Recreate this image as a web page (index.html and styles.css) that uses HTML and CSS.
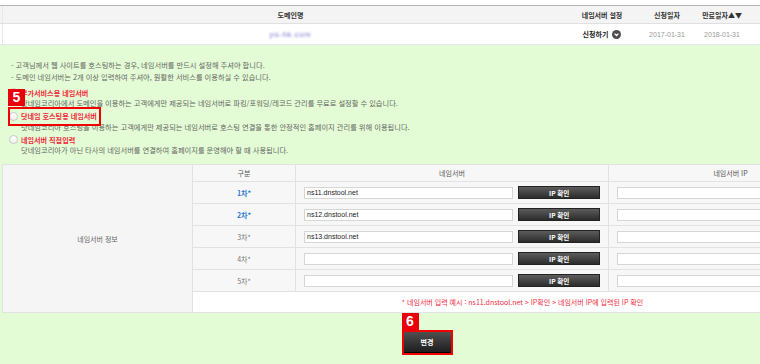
FILE: index.html
```html
<!DOCTYPE html>
<html lang="ko">
<head>
<meta charset="utf-8">
<title>네임서버 설정</title>
<link rel="stylesheet" href="styles.css">
</head>
<body>
<div class="page">
  <div class="domain">
    <div class="drow dhead">
      <div class="c c1">도메인명</div>
      <div class="c c2">네임서버 설정</div>
      <div class="c c3">신청일자</div>
      <div class="c c4">만료일자▲▼</div>
      <div class="c c5"></div>
    </div>
    <div class="drow dbody">
      <div class="c c1"><span class="blurred">ps-hk.com</span></div>
      <div class="c c2"><b class="apply">신청하기</b><svg class="chev" width="9" height="9" viewBox="0 0 9 9"><circle cx="4.5" cy="4.5" r="4.5" fill="#4d4d4d"/><polyline points="2.6,3.6 4.5,5.5 6.4,3.6" fill="none" stroke="#fff" stroke-width="1.3"/></svg></div>
      <div class="c c3 date">2017-01-31</div>
      <div class="c c4 date">2018-01-31</div>
      <div class="c c5"></div>
    </div>
  </div>

  <div class="setup">
    <ul class="notice">
      <li>- 고객님께서 웹 사이트를 호스팅하는 경우, 네임서버를 반드시 설정해 주셔야 합니다.</li>
      <li>- 도메인 네임서버는 2개 이상 입력하여 주셔야, 원활한 서비스를 이용하실 수 있습니다.</li>
    </ul>

    <div class="options">
      <div class="opt">
        <div class="opt-label"><span class="radio"></span><span class="lbl">부가서비스용 네임서버</span></div>
        <p class="desc">닷네임코리아에서 도메인을 이용하는 고객에게만 제공되는 네임서버로 파킹/포워딩/레코드 관리를 무료로 설정할 수 있습니다.</p>
      </div>
      <div class="opt">
        <div class="opt-label"><span class="radio"></span><span class="lbl">닷네임 호스팅용 네임서버</span><span class="mark mark5"><span class="badge">5</span></span></div>
        <p class="desc">닷네임코리아 호스팅을 이용하는 고객에게만 제공되는 네임서버로 호스팅 연결을 통한 안정적인 홈페이지 관리를 위해 이용됩니다.</p>
      </div>
      <div class="opt">
        <div class="opt-label"><span class="radio"></span><span class="lbl">네임서버 직접입력</span></div>
        <p class="desc">닷네임코리아가 아닌 타사의 네임서버를 연결하여 홈페이지를 운영해야 할 때 사용됩니다.</p>
      </div>
    </div>

    <table class="ns">
      <colgroup>
        <col class="k-info"><col class="k-no"><col class="k-ns"><col class="k-ip">
      </colgroup>
      <tr class="th">
        <td class="info" rowspan="7">네임서버 정보</td>
        <th>구분</th>
        <th>네임서버</th>
        <th>네임서버 IP</th>
      </tr>
      <tr>
        <td class="no req">1차*</td>
        <td class="nsc"><div class="fld"><input class="inp" value="ns11.dnstool.net"><span class="btn">IP 확인</span></div></td>
        <td class="ipc"><input class="inp ipin" value=""></td>
      </tr>
      <tr>
        <td class="no req">2차*</td>
        <td class="nsc"><div class="fld"><input class="inp" value="ns12.dnstool.net"><span class="btn">IP 확인</span></div></td>
        <td class="ipc"><input class="inp ipin" value=""></td>
      </tr>
      <tr>
        <td class="no">3차*</td>
        <td class="nsc"><div class="fld"><input class="inp" value="ns13.dnstool.net"><span class="btn">IP 확인</span></div></td>
        <td class="ipc"><input class="inp ipin" value=""></td>
      </tr>
      <tr>
        <td class="no">4차*</td>
        <td class="nsc"><div class="fld"><input class="inp" value=""><span class="btn">IP 확인</span></div></td>
        <td class="ipc"><input class="inp ipin" value=""></td>
      </tr>
      <tr>
        <td class="no">5차*</td>
        <td class="nsc"><div class="fld"><input class="inp" value=""><span class="btn">IP 확인</span></div></td>
        <td class="ipc"><input class="inp ipin" value=""></td>
      </tr>
      <tr class="note">
        <td colspan="3">* 네임서버 입력 예시 : ns11.dnstool.net &gt; IP확인 &gt; 네임서버 IP에 입력된 IP 확인</td>
      </tr>
    </table>

    <div class="actions">
      <div class="mark6"><span class="badge">6</span><span class="submit">변경</span></div>
    </div>
  </div>
</div>
</body>
</html>
```

FILE: styles.css
```css
html, body {
  margin: 0;
  padding: 0;
  overflow: hidden;
  background: #fff;
}
body {
  font-family: "Noto Sans CJK KR", "Liberation Sans", sans-serif;
  font-size: 7px;
  color: #666;
}
.page {
  width: 854px;
  padding-top: 5px;
}

/* top domain table */
.domain {
  border-top: 1px solid #b4b4b4;
}
.drow {
  display: grid;
  grid-template-columns: 2px 576px 48px 82px 28px 1fr;
}
.drow::before {
  content: "";
}
.dhead {
  height: 17px;
  background: #f4f4f4;
  border-bottom: 1px solid #e0e0e0;
  color: #333;
  font-weight: bold;
}
.dbody {
  height: 20px;
  background: #fff;
  border-bottom: 1px solid #e6e6e6;
}
.c {
  display: flex;
  align-items: center;
  justify-content: center;
  white-space: nowrap;
}
.c1 {
  border-left: 1px solid #e8e8e8;
}
.blurred {
  color: #7f79d6;
  filter: blur(1.1px);
  font-family: "Liberation Sans", sans-serif;
  font-size: 8px;
  letter-spacing: 0.5px;
}
.apply {
  color: #222;
  margin-right: 4px;
}
.chev {
  display: block;
}
.date {
  color: #999;
  font-family: "Liberation Sans", sans-serif;
  font-size: 7px;
}

/* green setup area */
.setup {
  background: #e4fcd5;
  padding-bottom: 20px;
}
.notice {
  list-style: none;
  margin: 0;
  padding: 14px 0 0 11px;
  line-height: 12px;
  font-size: 7.25px;
}
.options {
  padding: 4px 0 9px 9px;
}
.opt + .opt {
  margin-top: 2.5px;
}
.opt-label {
  position: relative;
  display: flex;
  align-items: center;
  height: 11px;
}
.radio {
  width: 7px;
  height: 7px;
  border: 1px solid #c8c8c8;
  border-radius: 50%;
  background: linear-gradient(#ffffff, #eeeeee);
  margin-right: 3px;
}
.lbl {
  color: #f2283c;
  font-weight: bold;
  font-size: 7.1px;
}
.desc {
  margin: 0;
  padding-left: 12px;
  line-height: 10px;
  font-size: 7.25px;
}
.mark {
  position: absolute;
  box-sizing: border-box;
  border: 2px solid #f00000;
}
.mark5 {
  left: -1px;
  top: -4px;
  width: 93px;
  height: 19px;
}
.badge {
  position: absolute;
  left: -2px;
  width: 17px;
  height: 17px;
  background: #e8000a;
  color: #fff;
  font-family: "Liberation Sans", sans-serif;
  font-weight: bold;
  font-size: 14px;
  line-height: 17px;
  text-align: center;
}
.mark5 .badge {
  bottom: calc(100% + 3px);
}

/* nameserver table */
.ns {
  margin-left: 2px;
  width: 850px;
  table-layout: fixed;
  border-collapse: collapse;
  background: #f7f7f7;
}
.k-info { width: 190px; }
.k-no { width: 103px; }
.k-ns { width: 313px; }
.k-ip { width: 244px; }
.ns td, .ns th {
  border: 1px solid #e2e2e2;
  padding: 0;
  height: 21px;
  text-align: center;
  font-weight: normal;
  color: #666;
  white-space: nowrap;
}
.ns tr.th th {
  height: 16px;
  color: #555;
}
.ns td.info {
  background: #f5f5f5;
  color: #666;
}
.ns td.no {
  color: #777;
}
.ns td.req {
  color: #2a7bd4;
  font-weight: bold;
}
.ns td.nsc, .ns td.ipc {
  padding: 0 8px;
  text-align: left;
}
.fld {
  display: flex;
  align-items: center;
  gap: 5px;
}
.inp {
  box-sizing: border-box;
  width: 210px;
  height: 12px;
  margin: 0;
  padding: 0 2px;
  border: 1px solid #d6d6d6;
  background: #fff;
  font-family: "Liberation Sans", sans-serif;
  font-size: 7px;
  color: #222;
  outline: none;
  display: block;
}
.ipin {
  width: 228px;
}
.btn {
  box-sizing: border-box;
  width: 82px;
  height: 13px;
  border: 1px solid #222;
  background: linear-gradient(#5c5c5c, #2c2c2c);
  color: #fff;
  font-weight: bold;
  font-size: 6.5px;
  display: flex;
  align-items: center;
  justify-content: center;
}
.ns tr.note td {
  background: #fff;
  color: #f2283c;
  height: 20px;
  font-size: 7px;
}

/* submit */
.actions {
  width: 854px;
  display: flex;
  justify-content: center;
  padding-top: 17px;
}
.mark6 {
  position: relative;
  border: 2px solid #f00000;
  display: flex;
}
.mark6 .badge {
  bottom: calc(100% + 2px);
}
.submit {
  width: 47px;
  height: 21px;
  background: linear-gradient(#505050, #1e1e1e);
  border-bottom: 1px solid #000;
  box-sizing: border-box;
  color: #fff;
  font-weight: bold;
  font-size: 7px;
  display: flex;
  align-items: center;
  justify-content: center;
}
```
